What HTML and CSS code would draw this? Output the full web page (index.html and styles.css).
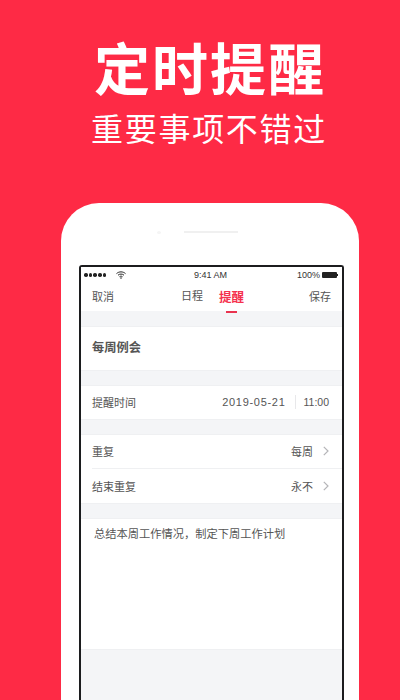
FILE: index.html
```html
<!DOCTYPE html>
<html lang="zh-CN">
<head>
<meta charset="UTF-8">
<meta name="viewport" content="width=device-width, initial-scale=1.0">
<title>定时提醒</title>
<link rel="stylesheet" href="styles.css">
</head>
<body>
<div class="headline">定时提醒</div>
<div class="subline">重要事项不错过</div>
<div class="phone">
  <div class="speaker"><span class="camera"></span><span class="slot"></span></div>
  <div class="screen">
    <div class="status-bar">
      <div class="status-left">
        <div class="signal"><i></i><i></i><i></i><i></i><i></i></div>
        <svg class="wifi" width="10" height="8" viewBox="0 0 10 8"><path d="M0.5 2.6C3 0.3 7 0.3 9.5 2.6M2 4.2C3.7 2.7 6.3 2.7 8 4.2M3.5 5.7C4.4 5 5.6 5 6.5 5.7" fill="none" stroke="#222" stroke-width="1"/><circle cx="5" cy="7" r="0.8" fill="#222"/></svg>
      </div>
      <div class="status-time">9:41 AM</div>
      <div class="status-right">100%<span class="battery"></span></div>
    </div>
    <div class="nav">
      <span class="nav-side">取消</span>
      <div class="tabs">
        <span class="tab">日程</span>
        <span class="tab active">提醒</span>
      </div>
      <span class="nav-side">保存</span>
    </div>
    <div class="title-row section">每周例会</div>
    <div class="section">
      <div class="row row-single">
        <span>提醒时间</span>
        <div class="row-value"><span class="date">2019-05-21</span><span class="divider"></span><span class="time">11:00</span></div>
      </div>
    </div>
    <div class="section">
      <div class="row row-line">
        <span>重复</span>
        <div class="row-value"><span>每周</span><svg class="chevron" width="6" height="10" viewBox="0 0 6 10"><path d="M0.8 0.8L5 5L0.8 9.2" fill="none" stroke="#b5b5b8" stroke-width="1.2"/></svg></div>
      </div>
      <div class="row">
        <span>结束重复</span>
        <div class="row-value"><span>永不</span><svg class="chevron" width="6" height="10" viewBox="0 0 6 10"><path d="M0.8 0.8L5 5L0.8 9.2" fill="none" stroke="#b5b5b8" stroke-width="1.2"/></svg></div>
      </div>
    </div>
    <div class="note section">总结本周工作情况，制定下周工作计划</div>
  </div>
</div>
</body>
</html>
```
FILE: styles.css
```css
html, body {
  height: 700px;
  overflow: hidden;
}

body {
  margin: 0;
  background-color: #fe2a45;
  font-family: "Liberation Sans", "Noto Sans CJK SC", sans-serif;
  color: #444;
}

.headline {
  padding: 39px 0 0 20px;
  height: 64px;
  line-height: 64px;
  font-size: 56px;
  font-weight: bold;
  letter-spacing: 2px;
  color: #fff;
  text-align: center;
}

.subline {
  margin-top: 7px;
  padding-left: 18px;
  height: 40px;
  line-height: 40px;
  font-size: 32px;
  letter-spacing: 1.7px;
  color: #fff;
  text-align: center;
}

.phone {
  margin: 53px 0 0 61px;
  width: 298px;
  height: 497px;
  background-color: #fff;
  border-radius: 38px 38px 0 0;
  overflow: hidden;
}

.speaker {
  height: 62px;
  display: flex;
  justify-content: center;
  align-items: flex-start;
  gap: 23px;
  padding: 28px 25px 0 0;
  box-sizing: border-box;
}

.camera {
  width: 4px;
  height: 3px;
  border-radius: 50%;
  background-color: #f5f5f5;
}

.slot {
  width: 54px;
  height: 2px;
  background-color: #f0f0f0;
}

.screen {
  margin-left: 18px;
  width: 265px;
  height: 435px;
  box-sizing: border-box;
  border: solid #1c1c1e;
  border-width: 2px 2.5px 0;
  border-radius: 3px 3px 0 0;
  background-color: #f4f5f7;
}

.status-bar {
  height: 16px;
  padding: 0 5px 0 3px;
  background-color: #fff;
  display: grid;
  grid-template-columns: 1fr auto 1fr;
  align-items: center;
  font-size: 9px;
  color: #333;
}

.status-left {
  display: flex;
  align-items: center;
  gap: 10px;
}

.signal {
  display: flex;
  gap: 1.2px;
}

.signal i {
  width: 3.5px;
  height: 3.5px;
  border-radius: 50%;
  background-color: #222;
}

.status-right {
  display: flex;
  justify-content: flex-end;
  align-items: center;
  gap: 2px;
}

.battery {
  position: relative;
  width: 15px;
  height: 6px;
  background-color: #222;
  border-radius: 1px;
}

.battery::after {
  content: "";
  position: absolute;
  left: 15px;
  top: 2px;
  width: 1px;
  height: 2px;
  background-color: #222;
}

.nav {
  height: 28px;
  padding: 0 11px 2px 11px;
  box-sizing: border-box;
  background-color: #fff;
  display: flex;
  justify-content: space-between;
  align-items: center;
  font-size: 11px;
  color: #555;
  position: relative;
}

.tabs {
  display: flex;
  gap: 16px;
  margin-left: 2px;
}

.tab {
  position: relative;
}

.tab.active {
  color: #f5304d;
  font-size: 12.5px;
  font-weight: bold;
}

.tab.active::after {
  content: "";
  position: absolute;
  left: 7px;
  bottom: -7px;
  width: 11px;
  height: 2px;
  background-color: #e9334f;
}

.section {
  margin-top: 14px;
  background-color: #fff;
  border-top: 1px solid #eff0f2;
  border-bottom: 1px solid #eff0f2;
}

.title-row {
  margin-top: 15px;
  height: 43px;
  line-height: 43px;
  padding-left: 11px;
  font-size: 12.25px;
  font-weight: bold;
  color: #555;
}

.row {
  height: 34px;
  padding: 0 13px 0 11px;
  display: flex;
  justify-content: space-between;
  align-items: center;
  font-size: 11px;
  color: #555;
}

.row-single {
  height: 31px;
  padding-bottom: 2px;
}

.row-line {
  position: relative;
  height: 32px;
  padding-bottom: 2px;
}

.row-line::after {
  content: "";
  position: absolute;
  left: 11px;
  right: 0;
  bottom: 0;
  height: 1px;
  background-color: #eff0f2;
}

.row-value {
  display: flex;
  align-items: center;
}

.date {
  letter-spacing: 0.7px;
}

.time {
  font-size: 10.5px;
}

.divider {
  width: 1px;
  height: 14px;
  margin: 0 8px 0 9px;
  background-color: #e8e8ea;
}

.chevron {
  margin-left: 10px;
}

.note {
  height: 132px;
  padding: 7px 12px 0 13px;
  box-sizing: border-box;
  font-size: 11.25px;
  line-height: 16px;
  color: #555;
}
```
